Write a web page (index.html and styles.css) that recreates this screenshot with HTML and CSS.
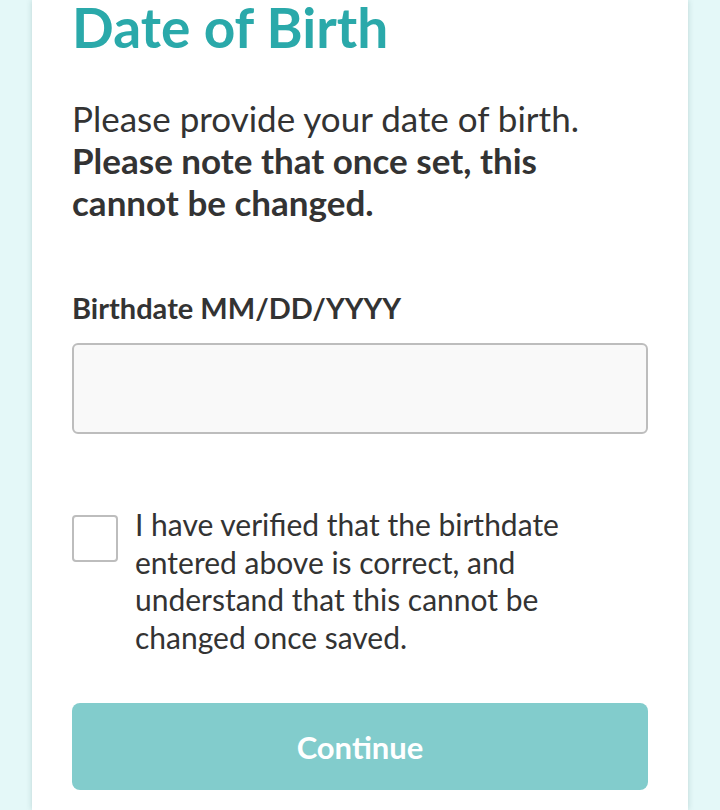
FILE: index.html
```html
<!DOCTYPE html>
<html lang="en">
<head>
<meta charset="utf-8">
<title>Date of Birth</title>
<link rel="stylesheet" href="styles.css">
</head>
<body>
<main class="card">
  <h1 class="title">Date of Birth</h1>
  <p class="intro">Please provide your date of birth. <strong>Please note that once set, this cannot be changed.</strong></p>
  <label class="label" for="dob">Birthdate MM/DD/YYYY</label>
  <input class="field" id="dob" type="text">
  <div class="confirm">
    <span class="box"></span>
    <span class="confirm-text">I have verified that the birthdate entered above is correct, and understand that this cannot be changed once saved.</span>
  </div>
  <button class="btn" type="button">Continue</button>
</main>
</body>
</html>
```
FILE: styles.css
```css
html, body {
  margin: 0;
  padding: 0;
  background: #e4f8f8;
}
body {
  font-family: "Lato", "Open Sans", sans-serif;
  color: #333333;
}
.card {
  margin: 0 32px;
  min-height: 810px;
  background: #ffffff;
  box-shadow: 0 0 6px rgba(0, 60, 60, 0.18);
  padding: 0 40px;
  display: flex;
  flex-direction: column;
  box-sizing: border-box;
}
.title {
  margin: 0;
  font-size: 55px;
  line-height: 54px;
  font-weight: 700;
  color: #2aa9aa;
}
.intro {
  margin: 43px 0 0;
  font-size: 35px;
  line-height: 42px;
}
.intro strong {
  font-weight: 700;
}
.label {
  margin-top: 65px;
  font-size: 29px;
  line-height: 40px;
  font-weight: 700;
}
.field {
  margin: 15px 0 0;
  height: 91px;
  box-sizing: border-box;
  border: 2px solid #bdbdbd;
  border-radius: 6px;
  background: #f9f9f9;
  font: inherit;
}
.confirm {
  margin-top: 72px;
  display: flex;
  gap: 17px;
}
.box {
  flex: none;
  width: 46px;
  height: 47px;
  margin-top: 9px;
  box-sizing: border-box;
  border: 2px solid #bdbdbd;
  border-radius: 4px;
  background: #ffffff;
}
.confirm-text {
  font-size: 30px;
  line-height: 37.5px;
}
.btn {
  margin-top: 47px;
  height: 87px;
  border: none;
  border-radius: 8px;
  background: #82cccc;
  color: #ffffff;
  font-family: inherit;
  font-size: 31px;
  font-weight: 700;
}
```
